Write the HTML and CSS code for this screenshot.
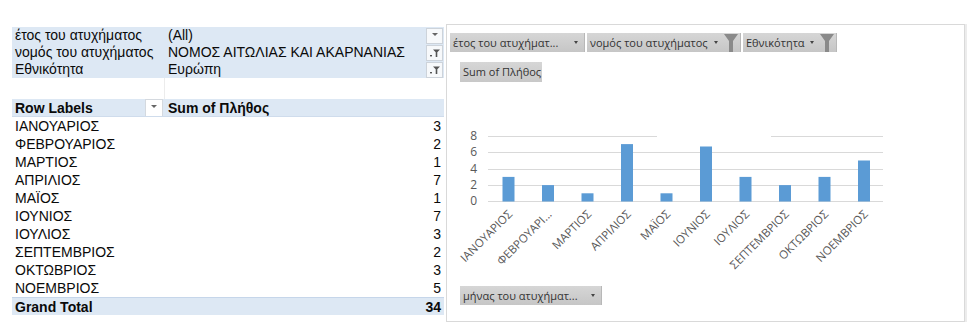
FILE: index.html
```html
<!DOCTYPE html>
<html lang="el">
<head>
    <meta charset="UTF-8">
    <title>Pivot</title>
    <link rel="stylesheet" href="styles.css">
</head>
<body>
    <div class="sheet">
        <div class="pivot">
            <div class="filters">
                <div class="cell">έτος του ατυχήματος</div>
                <div class="cell val">(All)</div>
                <div class="fcell"><span class="fbox"><span class="tri"></span></span></div>

                <div class="cell">νομός του ατυχήματος</div>
                <div class="cell val">ΝΟΜΟΣ ΑΙΤΩΛΙΑΣ ΚΑΙ ΑΚΑΡΝΑΝΙΑΣ</div>
                <div class="fcell">
                    <span class="fbox">
                        <svg width="12" height="10" viewBox="0 0 12 10"><rect x="1" y="7" width="2" height="1.4" fill="#555"/><path d="M4 1.5H11L8.3 4.3V9H6.7V4.3Z" fill="#555"/></svg>
                    </span>
                </div>

                <div class="cell">Εθνικότητα</div>
                <div class="cell val">Ευρώπη</div>
                <div class="fcell">
                    <span class="fbox">
                        <svg width="12" height="10" viewBox="0 0 12 10"><rect x="1" y="7" width="2" height="1.4" fill="#555"/><path d="M4 1.5H11L8.3 4.3V9H6.7V4.3Z" fill="#555"/></svg>
                    </span>
                </div>
            </div>

            <div class="blank"><div class="blank-a"></div><div></div></div>

            <div class="row head">
                <div class="cell label">Row Labels <span class="dbox"><span class="tri"></span></span></div>
                <div class="cell val">Sum of Πλήθος</div>
            </div>
            <div class="row"><div class="cell">ΙΑΝΟΥΑΡΙΟΣ</div><div class="cell num">3</div></div>
            <div class="row"><div class="cell">ΦΕΒΡΟΥΑΡΙΟΣ</div><div class="cell num">2</div></div>
            <div class="row"><div class="cell">ΜΑΡΤΙΟΣ</div><div class="cell num">1</div></div>
            <div class="row"><div class="cell">ΑΠΡΙΛΙΟΣ</div><div class="cell num">7</div></div>
            <div class="row"><div class="cell">ΜΑΪΟΣ</div><div class="cell num">1</div></div>
            <div class="row"><div class="cell">ΙΟΥΝΙΟΣ</div><div class="cell num">7</div></div>
            <div class="row"><div class="cell">ΙΟΥΛΙΟΣ</div><div class="cell num">3</div></div>
            <div class="row"><div class="cell">ΣΕΠΤΕΜΒΡΙΟΣ</div><div class="cell num">2</div></div>
            <div class="row"><div class="cell">ΟΚΤΩΒΡΙΟΣ</div><div class="cell num">3</div></div>
            <div class="row"><div class="cell">ΝΟΕΜΒΡΙΟΣ</div><div class="cell num">5</div></div>
            <div class="row total"><div class="cell">Grand Total</div><div class="cell num">34</div></div>
        </div>

        <div class="chart">
            <div class="chart-filters">
                <div class="fbtn w1"><span class="lbl">έτος του ατυχήματ...</span><span class="arr"></span></div>
                <div class="fbtn w2"><span class="lbl">νομός του ατυχήματος</span><span class="arr"></span>
                    <svg class="funnel" width="14" height="19" viewBox="0 0 14 19"><path d="M0 1H14L9 8V19H5V8Z" fill="#8a8a8a"/></svg>
                </div>
                <div class="fbtn w3"><span class="lbl">Εθνικότητα</span><span class="arr"></span>
                    <svg class="funnel" width="14" height="19" viewBox="0 0 14 19"><path d="M0 1H14L9 8V19H5V8Z" fill="#8a8a8a"/></svg>
                </div>
            </div>
            <div class="value-btn">Sum of Πλήθος</div>

            <svg class="plot" width="517" height="202" viewBox="0 0 517 202">
                <g stroke="#d9d9d9" stroke-width="1">
                    <line x1="41" y1="54.5" x2="210" y2="54.5"/>
                    <line x1="324" y1="54.5" x2="436" y2="54.5"/>
                    <line x1="41" y1="70.5" x2="436" y2="70.5"/>
                    <line x1="41" y1="87.5" x2="436" y2="87.5"/>
                    <line x1="41" y1="103.5" x2="436" y2="103.5"/>
                    <line x1="41" y1="119.5" x2="436" y2="119.5"/>
                </g>
                <g class="ylab" text-anchor="end">
                    <text x="30" y="58">8</text>
                    <text x="30" y="74">6</text>
                    <text x="30" y="91">4</text>
                    <text x="30" y="107">2</text>
                    <text x="30" y="123">0</text>
                </g>
                <g fill="#5b9bd5">
                    <rect x="55.5" y="94.9" width="12" height="24.6"/>
                    <rect x="95" y="103.1" width="12" height="16.4"/>
                    <rect x="134.5" y="111.3" width="12" height="8.2"/>
                    <rect x="174" y="62.1" width="12" height="57.4"/>
                    <rect x="213.5" y="111.3" width="12" height="8.2"/>
                    <rect x="253" y="64.5" width="12" height="55"/>
                    <rect x="292.5" y="94.9" width="12" height="24.6"/>
                    <rect x="332" y="103.1" width="12" height="16.4"/>
                    <rect x="371.5" y="94.9" width="12" height="24.6"/>
                    <rect x="411" y="78.5" width="12" height="41"/>
                </g>
                <g class="xlab" text-anchor="end">
                    <text transform="translate(66 133) rotate(-45)">ΙΑΝΟΥΑΡΙΟΣ</text>
                    <text transform="translate(105.5 133) rotate(-45)">ΦΕΒΡΟΥΑΡΙ...</text>
                    <text transform="translate(145 133) rotate(-45)">ΜΑΡΤΙΟΣ</text>
                    <text transform="translate(184.5 133) rotate(-45)">ΑΠΡΙΛΙΟΣ</text>
                    <text transform="translate(224 133) rotate(-45)">ΜΑΪΟΣ</text>
                    <text transform="translate(263.5 133) rotate(-45)">ΙΟΥΝΙΟΣ</text>
                    <text transform="translate(303 133) rotate(-45)">ΙΟΥΛΙΟΣ</text>
                    <text transform="translate(342.5 133) rotate(-45)">ΣΕΠΤΕΜΒΡΙΟΣ</text>
                    <text transform="translate(382 133) rotate(-45)">ΟΚΤΩΒΡΙΟΣ</text>
                    <text transform="translate(421.5 133) rotate(-45)">ΝΟΕΜΒΡΙΟΣ</text>
                </g>
            </svg>

            <div class="fbtn axis-btn"><span class="lbl">μήνας του ατυχήματ...</span><span class="arr"></span></div>
        </div>
    </div>
</body>
</html>
```

FILE: styles.css
```css
body {
    margin: 0;
    padding: 0;
    background-color: #fff;
}

.sheet {
    display: flex;
    align-items: flex-start;
    padding: 24px 0 0 12px;
}

/* pivot table */

.pivot {
    width: 432px;
    margin-top: 3px;
    font-family: "Liberation Sans", Arial, sans-serif;
    font-size: 14px;
    color: #0a0a0a;
}

.filters {
    display: grid;
    grid-template-columns: 153px 259px 20px;
    background-color: #dde8f4;
    line-height: 17px;
}

.cell {
    padding-left: 3px;
    white-space: nowrap;
    overflow: hidden;
}

.fcell {
    display: flex;
    align-items: center;
    justify-content: flex-end;
    padding-right: 1px;
}

.fbox {
    width: 15px;
    height: 14px;
    border: 1px solid #cdd3da;
    background-color: #f7f9fb;
    display: flex;
    align-items: center;
    justify-content: center;
}

.tri {
    width: 0;
    height: 0;
    border-left: 3px solid transparent;
    border-right: 3px solid transparent;
    border-top: 3px solid #666;
    margin-top: -3px;
}

.blank {
    display: grid;
    grid-template-columns: 153px 1fr;
    height: 21px;
}

.blank-a {
    border-right: 1px solid #ececec;
}

.row {
    display: grid;
    grid-template-columns: 153px 1fr;
    line-height: 18px;
    height: 18px;
}

.row .num {
    text-align: right;
    padding-right: 3px;
}

.row.head {
    background-color: #dde8f4;
    font-weight: bold;
    border-bottom: 1px solid #cfdcec;
    height: 17px;
}

.row.head .label {
    display: flex;
    align-items: center;
    justify-content: space-between;
    padding-right: 2px;
}

.dbox {
    width: 16px;
    height: 16px;
    border: 1px solid #d4d9df;
    background-color: #fff;
    display: flex;
    align-items: center;
    justify-content: center;
}

.row.total {
    background-color: #dde8f4;
    font-weight: bold;
    border-top: 1px solid #c6d6ea;
    height: 17px;
}

/* chart */

.chart {
    width: 517px;
    height: 288px;
    margin-left: 2px;
    border: 1px solid #d9d9d9;
    box-shadow: 2px 0 0 #ececec;
    padding-top: 8px;
    box-sizing: content-box;
    font-family: "Open Sans", "Noto Sans", sans-serif;
    font-size: 11px;
    color: #333;
}

.chart-filters {
    display: flex;
    gap: 2px;
    padding-left: 3px;
}

.fbtn {
    height: 19px;
    display: flex;
    align-items: center;
    background: linear-gradient(#d6d6d6, #c6c6c6);
    border-right: 1px solid #b8b8b8;
    box-sizing: border-box;
    padding-left: 3px;
    white-space: nowrap;
}

.fbtn .lbl {
    flex: 1;
}

.fbtn .arr {
    width: 0;
    height: 0;
    border-left: 2px solid transparent;
    border-right: 2px solid transparent;
    border-top: 3px solid #444;
    margin-right: 6px;
}

.fbtn .funnel {
    margin-right: 2px;
}

.w1 {
    width: 135px;
}

.w2 {
    width: 154px;
}

.w3 {
    width: 94px;
}

.value-btn {
    width: 82px;
    height: 20px;
    line-height: 20px;
    margin: 10px 0 0 13px;
    padding-left: 3px;
    box-sizing: border-box;
    background: linear-gradient(#d6d6d6, #c8c8c8);
    white-space: nowrap;
}

.plot {
    display: block;
}

.plot .ylab text {
    font-family: "Open Sans", "Noto Sans", sans-serif;
    font-size: 12px;
    fill: #595959;
}

.plot .xlab text {
    font-family: "Open Sans", "Noto Sans", sans-serif;
    font-size: 11.5px;
    fill: #595959;
}

.axis-btn {
    width: 142px;
    margin: 2px 0 0 13px;
}
```
